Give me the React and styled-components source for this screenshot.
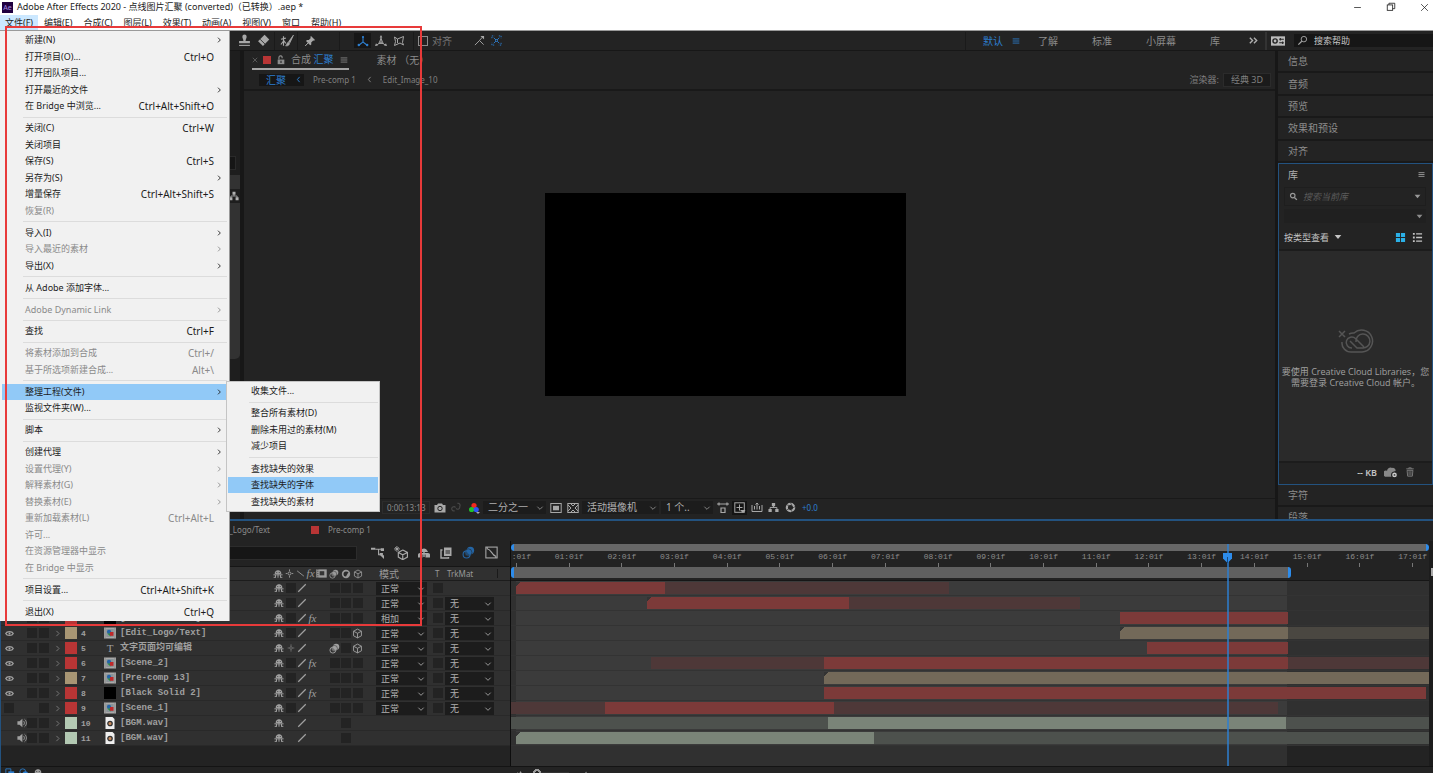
import React from 'react'
import styled, { createGlobalStyle } from 'styled-components'

const titleItems = ['文件(F)', '编辑(E)', '合成(C)', '图层(L)', '效果(T)', '动画(A)', '视图(V)', '窗口', '帮助(H)']

// type: 'sep' draws a rule, off greys the item out, sub adds the arrow
const fileMenu = [
    { label: '新建(N)', sub: true },
    { label: '打开项目(O)...', keys: 'Ctrl+O' },
    { label: '打开团队项目...' },
    { label: '打开最近的文件', sub: true },
    { label: '在 Bridge 中浏览...', keys: 'Ctrl+Alt+Shift+O' },
    { type: 'sep' },
    { label: '关闭(C)', keys: 'Ctrl+W' },
    { label: '关闭项目' },
    { label: '保存(S)', keys: 'Ctrl+S' },
    { label: '另存为(S)', sub: true },
    { label: '增量保存', keys: 'Ctrl+Alt+Shift+S' },
    { label: '恢复(R)', off: true },
    { type: 'sep' },
    { label: '导入(I)', sub: true },
    { label: '导入最近的素材', sub: true, off: true },
    { label: '导出(X)', sub: true },
    { type: 'sep' },
    { label: '从 Adobe 添加字体...' },
    { type: 'sep' },
    { label: 'Adobe Dynamic Link', sub: true, off: true },
    { type: 'sep' },
    { label: '查找', keys: 'Ctrl+F' },
    { type: 'sep' },
    { label: '将素材添加到合成', keys: 'Ctrl+/', off: true },
    { label: '基于所选项新建合成...', keys: 'Alt+\\', off: true },
    { type: 'sep' },
    { label: '整理工程(文件)', sub: true, active: true },
    { label: '监视文件夹(W)...' },
    { type: 'sep' },
    { label: '脚本', sub: true },
    { type: 'sep' },
    { label: '创建代理', sub: true },
    { label: '设置代理(Y)', sub: true, off: true },
    { label: '解释素材(G)', sub: true, off: true },
    { label: '替换素材(E)', sub: true, off: true },
    { label: '重新加载素材(L)', keys: 'Ctrl+Alt+L', off: true },
    { label: '许可...', off: true },
    { label: '在资源管理器中显示', off: true },
    { label: '在 Bridge 中显示', off: true },
    { type: 'sep' },
    { label: '项目设置...', keys: 'Ctrl+Alt+Shift+K' },
    { type: 'sep' },
    { label: '退出(X)', keys: 'Ctrl+Q' },
]

const subMenu = [
    { label: '收集文件...' },
    { type: 'sep' },
    { label: '整合所有素材(D)' },
    { label: '删除未用过的素材(M)' },
    { label: '减少项目' },
    { type: 'sep' },
    { label: '查找缺失的效果' },
    { label: '查找缺失的字体', active: true },
    { label: '查找缺失的素材' },
]

const RED = '#b83535'
const TAN = '#a89674'
const MINT = '#b3c9b3'

// bars: [length, tone, corner], lengths are in track units
const TRACK = 918
const layers = [
    { no: 1, name: '', color: RED, kind: 'comp', eye: true, mode: '正常', bars: [[5], [149, 'red', 1], [284, 'redDim']] },
    { no: 2, name: '', color: RED, kind: 'comp', eye: true, mode: '正常', trk: true, bars: [[136], [202, 'red', 1], [231, 'redDim']] },
    { no: 3, name: '[Black Solid 3]', color: RED, kind: 'solid', eye: true, fx: true, mode: '相加', trk: true, bars: [[609], [168, 'red']] },
    { no: 4, name: '[Edit_Logo/Text]', color: TAN, kind: 'comp', eye: true, cube: true, mode: '正常', trk: true, bars: [[609], [168, 'tan', 1], [141, 'tanDim']] },
    { no: 5, name: '文字页面均可编辑', color: RED, kind: 'text', eye: true, sun: true, blur: true, cube: true, mode: '正常', trk: true, bars: [[636], [141, 'red']] },
    { no: 6, name: '[Scene_2]', color: RED, kind: 'comp', eye: true, fx: true, mode: '正常', trk: true, bars: [[140], [173, 'redDim'], [464, 'red'], [141, 'redDim']] },
    { no: 7, name: '[Pre-comp 13]', color: TAN, kind: 'comp', eye: true, mode: '正常', trk: true, bars: [[313], [605, 'tan', 1]] },
    { no: 8, name: '[Black Solid 2]', color: RED, kind: 'solid', eye: true, fx: true, mode: '正常', trk: true, bars: [[313], [602, 'red']] },
    { no: 9, name: '[Scene_1]', color: RED, kind: 'comp', mode: '正常', trk: true, bars: [[94, 'redDim'], [229, 'red'], [444, 'redDim']] },
    { no: 10, name: '[BGM.wav]', color: MINT, kind: 'wav', audio: true, bars: [[317, 'mintDim'], [458, 'mint'], [143, 'mintDim']] },
    { no: 11, name: '[BGM.wav]', color: MINT, kind: 'wav', audio: true, bars: [[5], [358, 'mint', 1], [555, 'mintDim']] },
]

const tones = {
    red: '#7c3a39',
    redDim: '#4e3838',
    tan: '#736959',
    tanDim: '#4a4741',
    mint: '#7a8478',
    mintDim: '#4d514d',
}

const times = [':01f', '01:01f', '02:01f', '03:01f', '04:01f', '05:01f', '06:01f', '07:01f', '08:01f', '09:01f', '10:01f', '11:01f', '12:01f', '13:01f', '14:01f', '15:01f', '16:01f', '17:01f']

/* icons */

const glyphs = {
    stamp: <><path d="M6 .5a2 2 0 0 1 2 2c0 1.500-1 2-1 4h4v2H1v-2h4c0-2-1-2.500-1-4a2 2 0 0 1 2-2z" fill="currentColor" /><path d="M1 10.500h10" stroke="currentColor" /></>,
    eraser: <><path d="M7 .8 11.300 5 5.500 11 1 6.800z" fill="currentColor" /><path d="M3 5 7.300 9.200" stroke="#232323" strokeWidth=".8" /></>,
    roto: <><path d="M3 2v8M.8 4.500 5 3.500M3 6 .8 9M3 5.500 5 8" stroke="currentColor" fill="none" /><path d="M11.500 1 7.500 6.500l1 1zM7 7 8.200 8.200C7.500 10.500 6 10 4.800 10.200 6 9.500 5.800 7.500 7 7z" fill="currentColor" stroke="currentColor" strokeWidth=".7" /></>,
    pin: <><path d="M7 1l4 4-1 .8-.8-.2-2 2 .1 1.800L6.200 10.200 2 6l1-1 1.800.1 2-2L6.300 2z" fill="currentColor" /><path d="M4 8 1.200 11" stroke="currentColor" /></>,
    axis: <><path d="M6 1.500V7L1.800 10.200M6 7l4.200 3.200" stroke="currentColor" fill="none" strokeWidth="1.100" /><circle cx="6" cy="2" r="1.100" fill="currentColor" /><circle cx="1.800" cy="10" r="1.200" fill="currentColor" /><circle cx="10.200" cy="10" r="1.200" fill="currentColor" /></>,
    axisWorld: <><path d="M6 2V7L1.800 10M6 7l4.200 3M6 3.500 3.800 8.500h4.400z" stroke="currentColor" fill="none" strokeWidth=".9" /><path d="M6 0 7.300 2.600H4.700zM0 11l1-2.800L3 10.600zM12 11l-1-2.800L9 10.600z" fill="currentColor" /></>,
    axisView: <path d="M1.500 2 4.500 4 10.500 1.500 9.500 7.500 10.500 10 7 8 1.500 10.500 2.500 6.500zM4.500 4v4" stroke="currentColor" fill="none" />,
    snapLine: <><path d="M1 11 6 6l4.500 4.500M6 6l3-3.500" stroke="currentColor" fill="none" /><path d="M7 1h4v4z" fill="currentColor" /></>,
    snapGrid: <><path d="M1 3.500V1h2.500M8.500 1H11v2.500M11 8.500V11H8.500M3.500 11H1V8.500" stroke="currentColor" fill="none" strokeDasharray="1.500 .8" /><path d="M3 3l2 2M9 3 7 5M3 9l2-2M9 9 7 7" stroke="currentColor" /><rect x="4.800" y="4.800" width="2.400" height="2.400" fill="none" stroke="currentColor" strokeWidth=".8" /></>,
    menu: <path d="M2 3.500h8M2 6h8M2 8.500h8" stroke="currentColor" />,
    lock: <><rect x="2" y="5.500" width="8" height="5.500" fill="currentColor" /><path d="M3.500 5.500V3a2 2 0 0 1 3.800-.8V4" stroke="currentColor" fill="none" strokeWidth="1.400" /><path d="M6 7v2.500" stroke="#232323" strokeWidth="1.300" /></>,
    chevL: <path d="M7.500 2.500 4.500 6l3 3.500" stroke="currentColor" fill="none" strokeWidth="1.300" />,
    chevR: <path d="M4.500 2.500 8 6 4.500 9.500" stroke="currentColor" fill="none" strokeWidth="1.300" />,
    chevD: <path d="M2 4 6 8l4-4" stroke="currentColor" fill="none" strokeWidth="1.400" />,
    triD: <path d="M1 3h10L6 9z" fill="currentColor" />,
    more: <path d="M2 3l3 3-3 3M6.500 3l3 3-3 3" stroke="currentColor" fill="none" strokeWidth="1.500" />,
    search: <><circle cx="7.500" cy="4.500" r="3" stroke="currentColor" fill="none" /><path d="M5.200 6.800 1.500 10.500" stroke="currentColor" strokeWidth="1.300" /></>,
    find: <><circle cx="5" cy="4.800" r="3" stroke="currentColor" fill="none" strokeWidth="1.500" /><path d="M7.200 7.200 10.500 10.500" stroke="currentColor" strokeWidth="1.800" /></>,
    grid: <path d="M1 1h4.500v4.500H1zM6.500 1H11v4.500H6.500zM1 6.500h4.500V11H1zM6.500 6.500H11V11H6.500z" fill="currentColor" />,
    list: <><path d="M1 1h2v2H1zM1 5h2v2H1zM1 9h2v2H1z" fill="currentColor" /><path d="M4.500 2H11M4.500 6H11M4.500 10H11" stroke="currentColor" strokeWidth="1.500" /></>,
    cloudOff: <><path d="M1 10h6V7l3-2a2.500 2.500 0 0 0-3-2.500A3 3 0 0 0 2.600 5 2.500 2.500 0 0 0 1 10z" fill="currentColor" /><circle cx="9" cy="8.500" r="2.500" fill="#ccc" stroke="#232323" /><circle cx="9" cy="8.500" r=".8" fill="#444" /></>,
    trash: <><path d="M2.500 4h7l-.7 7H3.200zM1.500 2.200h9M4.500 2V1h3v1" stroke="currentColor" fill="none" /><path d="M4.700 5v5M6 5v5M7.300 5v5" stroke="currentColor" strokeWidth=".7" /></>,
    camera: <><path d="M.5 3H3l1-1.500h4L9 3h2.500v7.500H.5z" fill="currentColor" /><circle cx="6" cy="6.500" r="2.200" fill="none" stroke="#232323" /></>,
    chain: <path d="M5 6a2.300 2.300 0 1 0-1 3.500M5.500 7a2.300 2.300 0 0 0 4-2A2.300 2.300 0 0 0 7 1.500" stroke="currentColor" fill="none" strokeWidth="1.200" />,
    rgb: <><circle cx="6" cy="3.600" r="2.600" fill="#f2281e" /><circle cx="3.600" cy="7.500" r="2.600" fill="#1fc32c" /><circle cx="8.200" cy="7.500" r="2.600" fill="#2f55f5" /><path d="M8 10h4l-2 2z" fill="#aaa" /></>,
    region: <><rect x=".8" y="1.500" width="10.400" height="9" stroke="currentColor" fill="none" /><rect x="3" y="3.800" width="6" height="4.500" fill="currentColor" /></>,
    mask: <><rect x=".8" y="1.500" width="10.400" height="9" stroke="currentColor" fill="none" /><path d="M1 3l3 3-3 3M11 3 8 6l3 3M4 2l2 2 2-2M4 10l2-2 2 2" stroke="currentColor" fill="none" /></>,
    pixel: <path d="M0 2h12M2 .5v3M10 .5v3M4 10.500V6h4v4.500z" stroke="currentColor" fill="none" strokeWidth="1.200" />,
    fast: <><rect x=".8" y=".8" width="9.500" height="9.500" stroke="currentColor" fill="none" /><path d="M5.500 2.500v6M2.500 5.500h6" stroke="currentColor" /><path d="M6 8l5.500 0-2.500 3z" fill="currentColor" /></>,
    graph: <path d="M1 3v6.500h10V3M3.500 7.500V4M6 7.500V1M8.500 7.500V4M4.500 2.500 6 1l1.500 1.500" stroke="currentColor" fill="none" />,
    tree: <><path d="M4.200 1h3.600v3.500H4.200zM.5 7.500h3.600V11H.5zM7.900 7.500h3.600V11H7.900z" fill="currentColor" /><path d="M6 4v2M2.300 8V6h7.400v2" stroke="currentColor" fill="none" /></>,
    aperture: <><circle cx="6" cy="6" r="4" stroke="currentColor" fill="none" strokeWidth="2.400" /><path d="M6 .8 7.500 4M11 5 7.500 7M8 11 6 8M1.500 9 4.500 7M1.500 3l3.500 1" stroke="#232323" strokeWidth=".7" /></>,
    flow: <><path d="M4 3h6M7 3v5h3" stroke="currentColor" fill="none" /><path d="M0 1.500h4v2H0zM9 2h3v2.500H9zM8 6.500h3v2H8zM8.500 8.500l3.500 3.500V8.500z" fill="currentColor" /></>,
    cubeStar: <><path d="M2.500 0v5M0 2.500h5M1 1l3 3M4 1 1 4" stroke="currentColor" strokeWidth=".8" /><path d="M7.500 3.500 11.500 5.500v4L7.500 11.700 3.700 9.500v-4zM3.700 5.500 7.500 7.500l4-2M7.500 7.500v4" stroke="currentColor" fill="none" /></>,
    shy: <><path d="M2 6C2 3 3.500 1.500 6 1.500S10 3 10 6z" fill="currentColor" /><path d="M4 4.200h1.200M6.800 4.200H8" stroke="#2b2b2b" /><path d="M.5 7h11M6 2v8.500M3 7v3M9 7v3M.8 10h2.700M8.500 10h2.700" stroke="currentColor" strokeWidth="1.200" fill="none" /></>,
    shyOn: <><path d="M2 5C3 2.500 4.500 1.500 6 1.500S9 2.500 10 5z" fill="currentColor" /><path d="M0 10.500V7.500Q0 6 2 6h8q2 0 2 1.500v3H7.500V7.500h-3v3z" fill="currentColor" /><path d="M6 2v8" stroke="currentColor" strokeWidth="1.400" /></>,
    frames: <><path d="M4 .5h7.500V9H4z" fill="currentColor" /><path d="M2.500 3H1v8h7.500V10" stroke="currentColor" fill="none" strokeWidth="1.400" /><path d="M5.500 4h4.500M5.500 6h4.500" stroke="#232323" /></>,
    blur: <><circle cx="7.800" cy="4.200" r="3.400" fill="currentColor" /><circle cx="5.800" cy="6" r="3.400" fill="currentColor" fillOpacity=".6" stroke="#232323" strokeWidth=".5" /><circle cx="4.200" cy="7.800" r="3.200" fill="none" stroke="currentColor" /></>,
    curve: <><rect x=".8" y="1" width="10.400" height="10" stroke="currentColor" fill="none" /><path d="M2 2.500C6 3 6 8.500 10 9.500M2 1v2M10 9v2" stroke="currentColor" fill="none" /></>,
    sun: <><circle cx="6" cy="6" r="2" stroke="currentColor" fill="none" strokeWidth="1.300" /><path d="M6 .5v2.500M6 9v2.500M1 6h2M9 6h2" stroke="currentColor" strokeWidth="1.200" /></>,
    slash: <path d="M1.500 10.500 10.500 1.500" stroke="currentColor" strokeWidth="1.400" />,
    backslash: <path d="M1.500 2.500 10.500 9.500" stroke="currentColor" strokeWidth="1.200" />,
    film: <><rect x=".3" y="1.500" width="11.400" height="9" fill="currentColor" /><rect x="4" y="3.500" width="5" height="4.500" fill="#333" /><path d="M2 1.500v9" stroke="#333" strokeDasharray="1 1" /></>,
    half: <><circle cx="6" cy="6" r="5" fill="currentColor" /><path d="M6 3a3 3 0 0 0 0 6L9 3.500z" fill="#2b2b2b" /></>,
    cube: <path d="M6 1.200 10.300 3.500v5L6 10.800 1.700 8.500v-5zM1.700 3.500 6 5.800l4.300-2.300M6 5.800v5" stroke="currentColor" fill="none" />,
    eye: <><path d="M1 6C2.500 2.500 9.500 2.500 11 6 9.500 9.500 2.500 9.500 1 6z" stroke="currentColor" fill="none" strokeWidth="1.700" /><circle cx="6" cy="6" r="1.300" fill="#aaa" /></>,
    speaker: <><path d="M.5 4h2.500L6.500 1v10L3 8H.5z" fill="currentColor" /><path d="M8 3.500a4 4 0 0 1 0 5M9 1.500c3 2 3 7 0 9" stroke="currentColor" fill="none" /></>,
    comp: <><rect y=".5" width="12" height="11" fill="#a9a9a9" /><rect x="2.300" y="2" width="7.400" height="8" fill="#8a9499" /><circle cx="5" cy="4.800" r="2.100" fill="#2464a8" /><path d="M3.200 6.500h3.300v3z" fill="#2e8a3c" /><rect x="6" y="5" width="3.500" height="3.800" fill="#c0282a" /><path d="M1.100 1.500v9.500M10.900 1.500v9.500" stroke="#666" strokeDasharray="1 1" strokeWidth=".8" /></>,
    solid: <rect width="12" height="12" fill="#000" />,
    wav: <><path d="M1.500 0h7L10.500 2v10h-9z" fill="#eee" /><circle cx="6" cy="6.500" r="2.200" fill="#c98a5b" stroke="#333" strokeWidth="1.300" /></>,
    mountains: <path d="M0 10 4 5l2 2 2.500-4L12 10z" fill="currentColor" />,
    min: <path d="M1.500 6h9" stroke="currentColor" />,
    restore: <><rect x="1.500" y="3.500" width="6.500" height="6.500" stroke="currentColor" fill="none" /><path d="M3.500 3.500V1.500h7v6.500H8" stroke="currentColor" fill="none" /></>,
    close: <path d="M1.500 1.500 10.500 10.500M10.500 1.500 1.500 10.500" stroke="currentColor" />,
    stack: <><path d="M1 1h6v6H1z" stroke="currentColor" fill="none" /><path d="M4 4h7v7H4z" fill="currentColor" /></>,
    circles: <><circle cx="4.500" cy="4.500" r="3.500" stroke="currentColor" fill="none" /><circle cx="7.500" cy="7.500" r="3.500" fill="currentColor" /></>,
    panel: <><rect width="12" height="8" y="2" fill="#bbb" /><circle cx="3.500" cy="6" r="1.800" fill="none" stroke="#222" strokeWidth="1.200" /><path d="M7 4.500h4M7 7.500h4M8 3.500v2M10 6.500v2" stroke="#222" strokeWidth=".9" /></>,
}

const Icon = ({ name, size = 12 }) => (
    <Svg viewBox="0 0 12 12" width={size} height={size} aria-hidden="true">{glyphs[name]}</Svg>
)

/* file menu */

const MenuList = ({ items }) => items.map((item, i) => (
    item.type === 'sep'
        ? <MenuRule key={i} />
        : (
            <MenuEntry key={i}>
                <MenuButton $active={item.active} $off={item.off}>
                    <span>{item.label}</span>
                    {item.keys && <Keys>{item.keys}</Keys>}
                    {item.sub && <Arrow><Icon name="chevR" size={8} /></Arrow>}
                </MenuButton>
            </MenuEntry>
        )
))

const Drop = ({ label, options, width, big }) => (
    <DropBox $width={width}>
        <DropSelect aria-label={label} $big={big}>
            {options.map(o => <option key={o}>{o}</option>)}
        </DropSelect>
        <DropArrow><Icon name="chevD" size={8} /></DropArrow>
    </DropBox>
)

const Layer = ({ layer }) => (
    <LayerRow>
        <Cell>{layer.eye ? <Icon name="eye" size={9} /> : !layer.audio && <Well />}</Cell>
        <Cell>{layer.audio && <Icon name="speaker" size={10} />}</Cell>
        <Cell>{layer.no !== 9 && <Well />}</Cell>
        <Cell><Well /></Cell>
        <Cell $dim><Icon name="chevR" size={9} /></Cell>
        <Chip $color={layer.color} />
        <Num>{layer.no}</Num>
        <Cell>{layer.kind === 'text' ? <TextMark>T</TextMark> : <Icon name={layer.kind} />}</Cell>
        <Name>{layer.name}</Name>
        <Cell><Icon name="shy" size={10} /></Cell>
        <Cell $dim>{layer.sun ? <Icon name="sun" size={8} /> : !layer.audio && <Well />}</Cell>
        <Cell><Icon name="slash" size={10} /></Cell>
        <Cell>{layer.fx && <Fx>fx</Fx>}</Cell>
        <Cell />
        <Cell>{layer.blur ? <Icon name="blur" size={11} /> : !layer.audio && <Well />}</Cell>
        <Cell><Well /></Cell>
        <Cell>{layer.cube ? <Icon name="cube" size={11} /> : !layer.audio && <Well />}</Cell>
        <span />
        <span>{layer.mode && <Drop label={'模式 ' + layer.no} options={[layer.mode]} width={51} />}</span>
        <Cell>{layer.mode && <Well />}</Cell>
        <span>{layer.trk && <Drop label={'TrkMat ' + layer.no} options={['无']} width={49} />}</span>
    </LayerRow>
)

const App = () => {
    return (
        <Window>
            <GlobalStyle />
            <TitleBar>
                <Badge>Ae</Badge>
                <Title>Adobe After Effects 2020 - 点线图片汇聚 (converted)（已转换）.aep *</Title>
                <WindowButtons>
                    <button aria-label="最小化"><Icon name="min" size={9} /></button>
                    <button aria-label="还原"><Icon name="restore" size={10} /></button>
                    <button aria-label="关闭"><Icon name="close" size={9} /></button>
                </WindowButtons>
            </TitleBar>
            <MenuBar>
                {titleItems.map((t, i) => <MenuTitle key={t} $open={i === 0}>{t}</MenuTitle>)}
            </MenuBar>

            <Toolbar>
                <ToolGroup>
                    <Tool aria-label="仿制图章"><Icon name="stamp" size={13} /></Tool>
                    <Tool aria-label="橡皮擦"><Icon name="eraser" size={13} /></Tool>
                </ToolGroup>
                <ToolGroup>
                    <Tool aria-label="Roto 笔刷"><Icon name="roto" size={14} /></Tool>
                </ToolGroup>
                <ToolGroup $wide>
                    <Tool aria-label="操控点"><Icon name="pin" size={12} /></Tool>
                </ToolGroup>
                <ToolGroup $axis>
                    <Tool aria-label="本地轴" $on><Icon name="axis" size={12} /></Tool>
                    <Tool aria-label="世界轴"><Icon name="axisWorld" size={12} /></Tool>
                    <Tool aria-label="视图轴"><Icon name="axisView" size={12} /></Tool>
                </ToolGroup>
                <Snap><input type="checkbox" />对齐</Snap>
                <Tool aria-label="边缘对齐"><Icon name="snapLine" size={11} /></Tool>
                <Tool aria-label="网格对齐" $blue><Icon name="snapGrid" size={11} /></Tool>
                <Workspaces>
                    <Work $on>默认<Icon name="menu" size={10} /></Work>
                    <Work>了解</Work>
                    <Work>标准</Work>
                    <Work>小屏幕</Work>
                    <Work>库</Work>
                    <More aria-label="更多"><Icon name="more" size={11} /></More>
                </Workspaces>
                <PanelMark><Icon name="panel" size={14} /></PanelMark>
                <Help>
                    <Icon name="search" size={11} />
                    <input aria-label="搜索帮助" placeholder="搜索帮助" />
                </Help>
            </Toolbar>

            <Main>
                <Project>
                    <ProjectSearch />
                    <ProjectHead />
                    <ProjectTree><Icon name="tree" size={10} /></ProjectTree>
                    <ProjectScroll />
                </Project>
                <Comp>
                    <CompTabs>
                        <CompTab>
                            <Icon name="close" size={6} />
                            <Square />
                            <Icon name="lock" size={10} />
                            <span>合成 <b>汇聚</b></span>
                            <Icon name="menu" size={10} />
                        </CompTab>
                        <span>素材 （无）</span>
                    </CompTabs>
                    <Crumbs>
                        <CrumbOn>汇聚<Icon name="chevL" size={9} /></CrumbOn>
                        <Crumb>Pre-comp 1</Crumb>
                        <Icon name="chevL" size={9} />
                        <Crumb>Edit_Image_10</Crumb>
                        <Renderer>渲染器: <button>经典 3D</button></Renderer>
                    </Crumbs>
                    <Viewer><Canvas /></Viewer>
                    <ViewBar>
                        <Timecode>0:00:13:13</Timecode>
                        <ViewIcon aria-label="拍摄快照"><Icon name="camera" /></ViewIcon>
                        <ViewIcon aria-label="显示快照" $off><Icon name="chain" size={11} /></ViewIcon>
                        <ViewIcon aria-label="通道"><Icon name="rgb" /></ViewIcon>
                        <Drop label="分辨率" options={['二分之一']} width={63} big />
                        <ViewIcon aria-label="目标区域"><Icon name="region" /></ViewIcon>
                        <ViewIcon aria-label="透明网格"><Icon name="mask" /></ViewIcon>
                        <Drop label="视图" options={['活动摄像机']} width={77} big />
                        <Drop label="视图布局" options={['1 个..']} width={52} big />
                        <ViewIcon aria-label="像素长宽比"><Icon name="pixel" /></ViewIcon>
                        <ViewIcon aria-label="快速预览" $on><Icon name="fast" /></ViewIcon>
                        <ViewIcon aria-label="时间轴"><Icon name="graph" /></ViewIcon>
                        <ViewIcon aria-label="流程图"><Icon name="tree" size={11} /></ViewIcon>
                        <ViewIcon aria-label="曝光度"><Icon name="aperture" size={11} /></ViewIcon>
                        <Exposure>+0.0</Exposure>
                    </ViewBar>
                </Comp>
                <Side>
                    <PanelStack>
                        {['信息', '音频', '预览', '效果和预设', '对齐'].map(p => <PanelRow key={p}>{p}</PanelRow>)}
                    </PanelStack>
                    <Library>
                        <LibHead>库<Icon name="menu" size={9} /></LibHead>
                        <LibSearch>
                            <Icon name="find" size={9} />
                            <input aria-label="搜索当前库" placeholder="搜索当前库" />
                            <Icon name="triD" size={7} />
                        </LibSearch>
                        <LibPick aria-label="选择库"><Icon name="triD" size={7} /></LibPick>
                        <LibView>
                            <button>按类型查看<Icon name="triD" size={8} /></button>
                            <LibIcons><Icon name="grid" size={11} /><Icon name="list" size={11} /></LibIcons>
                        </LibView>
                        <LibBody>
                            <svg width="36" height="26" viewBox="0 0 36 26" fill="none" stroke="#555" strokeWidth="1.500" aria-hidden="true">
                                <path d="M1 3l6 6M7 3 1 9" />
                                <path d="M4 14a9 9 0 0 0 9 10h11a11 11 0 1 0-8-19 9 9 0 0 0-5 1" />
                                <path d="M14 20a5.500 5.500 0 1 1 3.500-9.500L26 19M18 14a7 7 0 1 1 6 6h-5l-7-7" />
                            </svg>
                            <p>要使用 Creative Cloud Libraries，您需要登录 Creative Cloud 帐户。</p>
                        </LibBody>
                        <LibFoot>-- KB<Icon name="cloudOff" size={14} /><Icon name="trash" size={10} /></LibFoot>
                    </Library>
                    <PanelTail>
                        <PanelRow>字符</PanelRow>
                        <PanelRow>段落</PanelRow>
                    </PanelTail>
                </Side>
            </Main>

            <Timeline>
                <TimeTabs>
                    <TimeTab>Edit_Logo/Text</TimeTab>
                    <Square />
                    <TimeTab>Pre-comp 1</TimeTab>
                </TimeTabs>
                <TimeBody>
                    <LayerPane>
                        <LayerTools>
                            <input aria-label="搜索图层" />
                            <Icon name="flow" size={13} />
                            <Icon name="cubeStar" size={14} />
                            <Icon name="shyOn" size={12} />
                            <Icon name="frames" size={12} />
                            <BlurOn><Icon name="blur" size={13} /></BlurOn>
                            <Icon name="curve" size={13} />
                        </LayerTools>
                        <LayerHead>
                            <HeadCells>
                                <Icon name="shy" size={10} />
                                <Icon name="sun" size={9} />
                                <Icon name="backslash" size={9} />
                                <Fx>fx</Fx>
                                <Icon name="film" size={11} />
                                <Icon name="blur" size={10} />
                                <Icon name="half" size={10} />
                                <Icon name="cube" size={10} />
                            </HeadCells>
                            <ModeHead>模式</ModeHead>
                            <THead>T</THead>
                            <TrkHead>TrkMat</TrkHead>
                        </LayerHead>
                        {layers.map(l => <Layer key={l.no} layer={l} />)}
                    </LayerPane>
                    <TrackPane>
                        <Navigator><NavBar /></Navigator>
                        <Ruler>{times.map(t => <Tick key={t}>{t}</Tick>)}</Ruler>
                        <WorkArea><WorkBar /></WorkArea>
                        <Tracks>
                            {layers.map(l => (
                                <Track key={l.no}>
                                    {l.bars.map(([len, tone, corner], i) => (
                                        <Bar key={i} $tone={tone} $corner={corner} style={{ width: (len / TRACK) * 100 + '%' }} />
                                    ))}
                                </Track>
                            ))}
                            <TrackRest />
                        </Tracks>
                        <Playhead>
                            <svg width="9" height="11" viewBox="0 0 9 11" aria-hidden="true">
                                <path d="M0 0h9v5.500L4.500 10 0 5.500z" fill="#2d8ceb" />
                                <path d="M4.500 4v6" stroke="#174a80" />
                            </svg>
                        </Playhead>
                    </TrackPane>
                    <Gutter />
                </TimeBody>
                <TimeFoot>
                    <FootLeft><Icon name="stack" size={10} /><Icon name="circles" size={10} /><i><Icon name="shy" size={10} /></i></FootLeft>
                    <FootZoom><Icon name="mountains" size={8} /><Knob /><Icon name="mountains" size={10} /></FootZoom>
                </TimeFoot>
            </Timeline>

            <FileMenu><MenuList items={fileMenu} /></FileMenu>
            <SubMenu><MenuList items={subMenu} /></SubMenu>
            <Marker />
        </Window>
    )
}

export default App

const GlobalStyle = createGlobalStyle`
* { box-sizing: border-box; }
body {
    margin: 0;
    background: #171717;
    overflow: hidden;
}
body, button, input, select {
    font-family: "Noto Sans", "Noto Sans CJK SC", sans-serif;
    font-size: 9px;
}
button {
    padding: 0;
    border: 0;
    background: none;
    color: inherit;
    display: flex;
    align-items: center;
    white-space: nowrap;
}
input {
    border: 0;
    outline: 0;
    min-width: 0;
}
`

const Svg = styled.svg`
display: block;
flex: none;
`

const Window = styled.div`
position: relative;
display: flex;
flex-direction: column;
height: 100vh;
min-height: 640px;
overflow: hidden;
color: #8c8c8c;
`

const TitleBar = styled.header`
display: flex;
align-items: center;
height: 14px;
flex: none;
background: #fff;
color: #222;
`
const Badge = styled.span`
width: 11px;
height: 11px;
margin: 0 4px 0 2px;
background: #1f0040;
color: #a68be0;
font-size: 7px;
line-height: 11px;
text-align: center;
`
const Title = styled.span`
line-height: 14px;
white-space: nowrap;
`
const WindowButtons = styled.div`
display: flex;
gap: 24px;
margin-left: auto;
padding-right: 4px;
`

const MenuBar = styled.nav`
display: flex;
gap: 1px;
height: 17px;
flex: none;
background: #fff;
border-bottom: 1px solid #9a9a9a;
color: #222;
`
const MenuTitle = styled.button`
height: 15px;
margin-top: 1px;
padding: 0 5px;
background: ${p => p.$open ? '#cce8ff' : 'none'};
`

const Toolbar = styled.div`
display: flex;
align-items: center;
height: 20px;
flex: none;
padding-left: 233px;
background: #232323;
border-bottom: 1px solid #171717;
color: #a8a8a8;
`
const ToolGroup = styled.div`
display: flex;
align-items: center;
gap: ${p => p.$axis ? 1 : 2}px;
height: 18px;
padding-left: ${p => p.$axis ? 14 : 3}px;
padding-right: ${p => p.$wide ? 21 : p.$axis ? 6 : 2}px;
border-right: 1px solid #1a1a1a;
`
const Tool = styled.button`
width: 17px;
height: 15px;
justify-content: center;
background: ${p => p.$on ? '#161616' : 'none'};
color: ${p => p.$on || p.$blue ? '#2d7fd0' : '#a8a8a8'};
`
const Snap = styled.label`
display: flex;
align-items: center;
gap: 4px;
margin: 0 19px 0 4px;
font-size: 10px;
color: #777;
input {
    appearance: none;
    width: 10px;
    height: 10px;
    margin: 0;
    border: 1px solid #8c8c8c;
}
`
const Workspaces = styled.div`
display: flex;
align-items: center;
gap: 34px;
height: 18px;
margin-left: auto;
padding: 0 6px 0 17px;
border-left: 1px solid #1a1a1a;
border-right: 2px solid #333;
`
const Work = styled.button`
font-size: 10px;
gap: 8px;
margin-right: ${p => p.$on ? -17 : 0}px;
color: ${p => p.$on ? '#2d7fd0' : '#8c8c8c'};
`
const More = styled.button`
margin-left: -6px;
color: #b0b0b0;
`
const PanelMark = styled.span`
margin: 0 9px 0 4px;
`
const Help = styled.label`
display: flex;
align-items: center;
gap: 6px;
width: 139px;
height: 13px;
padding-left: 3px;
background: #161616;
input {
    flex: 1;
    padding: 0;
    background: none;
    color: #c4c4c4;
}
input::placeholder { color: #c4c4c4; }
`

const Main = styled.main`
display: flex;
flex: 1;
min-height: 0;
background: #171717;
`
const Project = styled.section`
display: flex;
flex-direction: column;
width: 240px;
flex: none;
background: #1e1e1e;
padding-top: 105px;
`
const ProjectSearch = styled.div`
width: 236px;
height: 14px;
background: #161616;
border: 1px solid #2a2a2a;
`
const ProjectHead = styled.div`
height: 14px;
margin-top: 5px;
background: #323232;
`
const ProjectTree = styled.div`
display: flex;
justify-content: flex-end;
padding: 2px 1px;
color: #b0b0b0;
`
const ProjectScroll = styled.div`
height: 156px;
background: #323232;
border-radius: 0 0 5px 5px;
`

const Comp = styled.section`
display: flex;
flex-direction: column;
flex: 1;
min-width: 0;
margin: 0 3px 0 4px;
background: #232323;
`
const CompTabs = styled.div`
display: flex;
gap: 28px;
height: 19px;
padding-left: 8px;
font-size: 10px;
line-height: 19px;
white-space: pre;
`
const CompTab = styled.div`
display: flex;
align-items: center;
gap: 5px;
border-bottom: 2px solid #a5a5a5;
b {
    color: #2d7fd0;
    font-weight: 400;
}
`
const Square = styled.i`
width: 8px;
height: 8px;
flex: none;
background: ${RED};
`
const Crumbs = styled.div`
display: flex;
align-items: center;
gap: 9px;
height: 21px;
padding: 0 4px 0 15px;
border-bottom: 2px solid #191919;
color: #808080;
`
const CrumbOn = styled.button`
gap: 8px;
height: 12px;
padding: 0 1px 0 7px;
background: #161616;
color: #2d7fd0;
font-size: 10px;
`
const Crumb = styled.button`
height: 12px;
font-size: 8px;
`
const Renderer = styled.div`
display: flex;
align-items: center;
gap: 4px;
margin-left: auto;
button {
    height: 14px;
    padding: 0 7px;
    background: #1b1b1b;
    border: 1px solid #2b2b2b;
}
`
const Viewer = styled.div`
display: flex;
align-items: center;
justify-content: center;
flex: 1;
min-height: 0;
padding-right: 68px;
`
const Canvas = styled.div`
width: 37.5%;
aspect-ratio: 16 / 9;
background: #000;
`
const ViewBar = styled.div`
display: flex;
align-items: center;
gap: 2px;
height: 18px;
flex: none;
padding-left: 138px;
margin-bottom: 3px;
border-top: 1px solid #191919;
`
const Timecode = styled.button`
height: 13px;
width: 48px;
padding-left: 4px;
border: 1px solid #2c2c2c;
font-size: 8px;
`
const ViewIcon = styled.button`
width: 15px;
height: 14px;
justify-content: center;
background: ${p => p.$on ? '#141414' : 'none'};
color: ${p => p.$off ? '#484848' : '#a8a8a8'};
`
const Exposure = styled.button`
margin-left: 2px;
font-size: 8px;
color: #2d7fd0;
`

const DropBox = styled.span`
position: relative;
display: block;
width: ${p => p.$width}px;
height: 13px;
`
const DropSelect = styled.select`
appearance: none;
display: block;
width: 100%;
height: 13px;
padding: 0 0 0 5px;
border: 0;
background: #1c1c1c;
color: #b0b0b0;
font-size: ${p => p.$big ? 10 : 9}px;
line-height: 13px;
`
const DropArrow = styled.span`
position: absolute;
right: 2px;
top: 3px;
pointer-events: none;
`

const Side = styled.aside`
display: flex;
flex-direction: column;
width: 155px;
flex: none;
min-height: 0;
`
const PanelStack = styled.div`
display: flex;
flex-direction: column;
height: 112px;
flex: none;
`
const PanelRow = styled.button`
flex: 1 0 auto;
min-height: 20px;
padding-left: 10px;
background: #232323;
border-bottom: 2px solid #191919;
font-size: 10px;
line-height: 16px;
`
const Library = styled.section`
display: flex;
flex-direction: column;
flex: 1;
min-height: 0;
border: 1px solid #23527f;
background: #232323;
`
const LibHead = styled.div`
display: flex;
align-items: center;
justify-content: space-between;
height: 21px;
padding: 0 6px 0 9px;
font-size: 10px;
color: #b0b0b0;
`
const LibSearch = styled.label`
display: flex;
align-items: center;
gap: 5px;
height: 19px;
margin: 2px 6px 3px 5px;
padding: 0 4px;
border: 1px solid #1e1e1e;
color: #999;
input {
    flex: 1;
    padding: 0;
    background: none;
    font-style: italic;
}
input::placeholder { color: #5c5c5c; }
`
const LibPick = styled.button`
justify-content: flex-end;
height: 14px;
margin: 0 6px 2px 5px;
padding-right: 3px;
background: #202020;
`
const LibView = styled.div`
display: flex;
align-items: center;
justify-content: space-between;
height: 26px;
padding: 0 9px 0 5px;
border-bottom: 2px solid #1c1c1c;
color: #c4c4c4;
button { gap: 5px; }
`
const LibIcons = styled.span`
display: flex;
gap: 6px;
svg:first-child { color: #2bb0e6; }
`
const LibBody = styled.div`
display: flex;
flex-direction: column;
align-items: center;
justify-content: center;
gap: 12px;
flex: 1;
min-height: 0;
padding-top: 4px;
background: #2a2a2a;
p {
    margin: 0;
    font-family: "Open Sans", "Noto Sans CJK SC", sans-serif;
    font-size: 9px;
    line-height: 11px;
    text-align: center;
    color: #a0a0a0;
}
`
const LibFoot = styled.div`
display: flex;
align-items: center;
justify-content: flex-end;
gap: 7px;
height: 23px;
flex: none;
padding: 0 17px 3px 0;
border-top: 2px solid #1c1c1c;
font-weight: 600;
color: #c4c4c4;
svg { color: #888; }
`
const PanelTail = styled.div`
display: flex;
flex-direction: column;
height: 34px;
flex: none;
overflow: hidden;
button { height: 22px; flex: none; }
`

const Timeline = styled.section`
flex: none;
border-top: 2px solid #23527f;
border-left: 1px solid #23527f;
background: #232323;
`
const TimeTabs = styled.div`
display: flex;
align-items: center;
gap: 9px;
height: 20px;
padding: 0 0 3px 214px;
`
const TimeTab = styled.button`
height: 17px;
margin-right: 32px;
font-size: 8px;
`
const TimeBody = styled.div`
display: flex;
`
const LayerPane = styled.div`
width: 510px;
flex: none;
border-right: 1px solid #0d0d0d;
padding-bottom: 20px;
`
const LayerTools = styled.div`
display: flex;
align-items: center;
gap: 10px;
height: 26px;
padding-bottom: 2px;
color: #a8a8a8;
border-bottom: 1px solid #161616;
input {
    width: 352px;
    height: 14px;
    margin: 0 4px 0 4px;
    background: #161616;
    border: 1px solid #2c2c2c;
    color: #a8a8a8;
}
`
const BlurOn = styled.span`
color: #2465a5;
`
const LayerHead = styled.div`
display: flex;
align-items: center;
height: 14px;
background: #303030;
border-bottom: 1px solid #1c1c1c;
color: #999;
`
const HeadCells = styled.div`
display: flex;
align-items: center;
justify-content: space-between;
width: 90px;
margin: 0 14px 0 272px;
flex: none;
`
const ModeHead = styled.span`
width: 56px;
padding-left: 2px;
font-size: 10px;
line-height: 12px;
`
const THead = styled.span`
width: 14px;
padding-left: 2px;
font-size: 8px;
`
const TrkHead = styled.span`
padding-right: 24px;
border-right: 1px solid #1a1a1a;
font-size: 8px;
line-height: 9px;
`
const LayerRow = styled.div`
display: grid;
grid-template-columns: 16px 9px 12px 11px 16px 13px 24px 16px 155px 12px 11px 11px 11px 11px 11px 12px 11px 13px 55px 14px 1fr;
align-items: center;
height: 15px;
background: #303030;
border-bottom: 1px solid #292929;
color: #a0a0a0;
`
const Cell = styled.span`
display: flex;
align-items: center;
justify-content: center;
min-width: 0;
color: ${p => p.$dim ? '#777' : 'inherit'};
`
const Well = styled.i`
width: 10px;
height: 10px;
flex: none;
background: #232323;
`
const Chip = styled.i`
width: 12px;
height: 12px;
background: ${p => p.$color};
`
const Num = styled.span`
padding-left: 3px;
font-family: "Liberation Mono", monospace;
font-size: 8px;
font-weight: 700;
`
const TextMark = styled.span`
font-family: "Liberation Serif", serif;
font-size: 11px;
line-height: 12px;
`
const Name = styled.span`
padding: 1px 0 0 2px;
font-family: "Liberation Mono", "Noto Sans CJK SC", monospace;
font-size: 9px;
font-weight: 700;
line-height: 13px;
white-space: nowrap;
`
const Fx = styled.i`
font-family: "Liberation Serif", serif;
font-size: 11px;
line-height: 11px;
`

const TrackPane = styled.div`
position: relative;
flex: 1;
min-width: 0;
display: flex;
flex-direction: column;
`
const Navigator = styled.div`
padding-top: 3px;
height: 11px;
`
const NavBar = styled.div`
height: 7px;
background: #676767;
border: solid #2d8ceb;
border-width: 0 3px;
border-radius: 4px;
`
const Ruler = styled.div`
display: flex;
height: 15px;
margin-left: -21px;
clip-path: inset(0 0 0 21px);
overflow: hidden;
`
const Tick = styled.span`
display: flex;
justify-content: center;
flex: 0 0 5.615%;
font-family: "Liberation Mono", monospace;
font-size: 8px;
line-height: 10px;
background: linear-gradient(#777, #777) center bottom / 1px 4px no-repeat;
&:first-child { padding-left: 10px; }
`
const WorkArea = styled.div`
height: 14px;
padding: 0 0 2px;
border-bottom: 1px solid #161616;
`
const WorkBar = styled.div`
width: 85%;
height: 11px;
background: #606060;
border: solid #2d8ceb;
border-width: 0 3px;
border-radius: 3px;
`
const Tracks = styled.div`
flex: 1;
display: flex;
flex-direction: column;
background: linear-gradient(90deg, #303030 0 5px, #3b3b3b 5px 84.5%, #303030 84.5%);
`
const Track = styled.div`
display: flex;
height: 15px;
padding: 1px 0;
border-bottom: 1px solid #333;
`
const Bar = styled.i`
background: ${p => p.$corner ? `linear-gradient(135deg, #333 3px, transparent 3px), ${tones[p.$tone]}` : tones[p.$tone] || 'none'};
`
const TrackRest = styled.div`
flex: 1;
background: linear-gradient(90deg, #303030 84.5%, #232323 84.5%);
`
const Playhead = styled.div`
position: absolute;
top: 3px;
bottom: 0;
left: 78%;
width: 2px;
background: rgba(45, 127, 208, .75);
svg {
    position: absolute;
    top: 9px;
    left: -4px;
}
`
const Gutter = styled.div`
width: 4px;
background: #1c1c1c;
&::before {
    content: '';
    display: block;
    width: 2px;
    height: 8px;
    margin: 27px 0 0 2px;
    background: #aaa;
}
`
const TimeFoot = styled.footer`
display: flex;
height: 7px;
overflow: hidden;
border-top: 1px solid #141414;
color: #a0a0a0;
`
const FootLeft = styled.div`
display: flex;
gap: 4px;
width: 514px;
padding: 1px 0 0 4px;
color: #2d7fd0;
i { color: #a0a0a0; }
`
const FootZoom = styled.div`
display: flex;
gap: 10px;
padding-top: 2px;
`
const Knob = styled.i`
width: 36px;
height: 8px;
background: radial-gradient(circle at 4px 4px, #232323 2px, #999 2px 4px, transparent 4px), linear-gradient(#333, #333) 0 3px / 100% 2px no-repeat;
`

const FileMenu = styled.ul`
position: absolute;
left: 0;
top: 31px;
display: flex;
flex-direction: column;
width: 230px;
height: 590px;
margin: 0;
padding: 1px 2px;
list-style: none;
background: #f1f1f1;
border-right: 1px solid #999;
color: #1c1c1c;
`
const SubMenu = styled(FileMenu)`
left: 226px;
top: 381px;
width: 154px;
height: 131px;
padding: 1px;
border: 1px solid #c4c4c4;
`
const MenuEntry = styled.li`
display: flex;
flex: 3 0 0;
min-height: 0;
`
const MenuRule = styled.li`
display: flex;
align-items: center;
flex: 1 0 0;
padding-left: 21px;
&::after {
    content: '';
    flex: 1;
    height: 1px;
    background: #dcdcdc;
}
`
const MenuButton = styled.button`
position: relative;
flex: 1;
padding: 0 13px 0 23px;
line-height: 14px;
background: ${p => p.$active ? '#91c9f7' : 'none'};
color: ${p => p.$off ? '#8a8a8a' : 'inherit'};
`
const Keys = styled.span`
margin-left: auto;
font-size: 10px;
`
const Arrow = styled.span`
position: absolute;
right: 4px;
`

const Marker = styled.div`
position: absolute;
left: 5px;
top: 26px;
width: 417px;
height: 600px;
border: 2px solid #e83a3a;
pointer-events: none;
`
